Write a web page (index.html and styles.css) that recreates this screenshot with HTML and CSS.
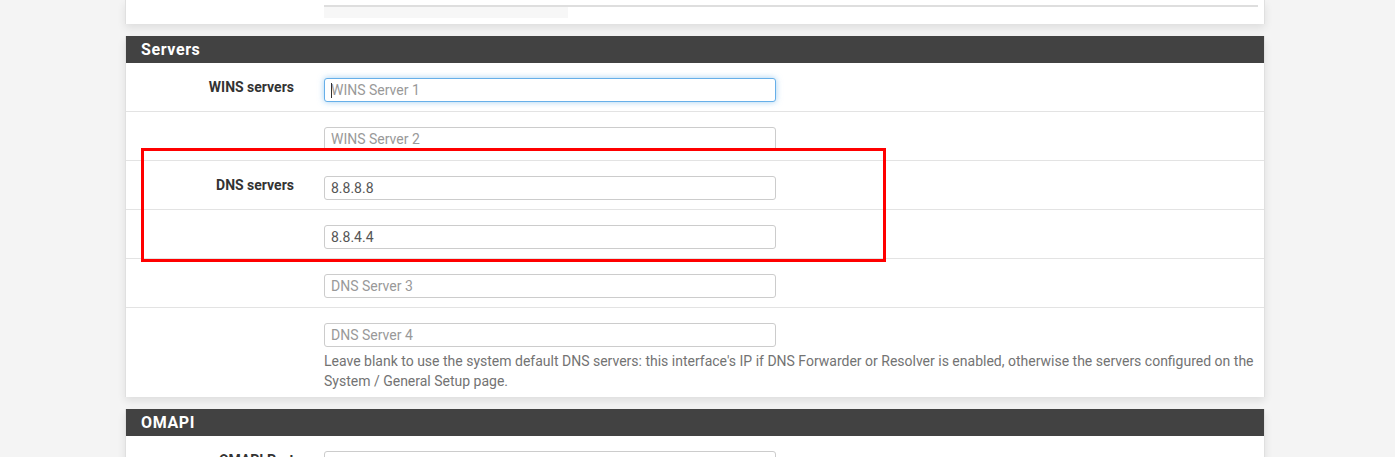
FILE: index.html
```html
<!DOCTYPE html>
<html lang="en">
<head>
<meta charset="utf-8">
<title>Servers</title>
<link rel="stylesheet" href="styles.css">
</head>
<body>
<div class="page">
  <div class="panel panel-top">
    <div class="rule"></div>
    <div class="bar"></div>
  </div>

  <div class="panel">
    <div class="panel-heading">Servers</div>
    <div class="panel-body">
      <div class="form-row">
        <label class="form-label">WINS servers</label>
        <div class="form-field">
          <span class="caret-wrap">
            <input class="form-input focused" type="text" placeholder="WINS Server 1">
            <span class="caret"></span>
          </span>
        </div>
      </div>
      <div class="form-row">
        <label class="form-label"></label>
        <div class="form-field"><input class="form-input" type="text" placeholder="WINS Server 2"></div>
      </div>
      <div class="form-row">
        <label class="form-label">DNS servers</label>
        <div class="form-field"><input class="form-input" type="text" value="8.8.8.8"></div>
      </div>
      <div class="form-row">
        <label class="form-label"></label>
        <div class="form-field"><input class="form-input" type="text" value="8.8.4.4"></div>
      </div>
      <div class="form-row">
        <label class="form-label"></label>
        <div class="form-field"><input class="form-input" type="text" placeholder="DNS Server 3"></div>
      </div>
      <div class="form-row form-row-last">
        <label class="form-label"></label>
        <div class="form-field">
          <input class="form-input" type="text" placeholder="DNS Server 4">
          <p class="help">Leave blank to use the system default DNS servers: this interface's IP if DNS Forwarder or Resolver is enabled, otherwise the servers configured on the System / General Setup page.</p>
        </div>
      </div>
    </div>
  </div>

  <div class="panel">
    <div class="panel-heading">OMAPI</div>
    <div class="panel-body">
      <div class="form-row">
        <label class="form-label">OMAPI Port</label>
        <div class="form-field"><input class="form-input" type="text"></div>
      </div>
      <div class="form-row">
        <label class="form-label">OMAPI Key</label>
        <div class="form-field"><input class="form-input" type="text"></div>
      </div>
    </div>
  </div>
</div>
<div class="highlight"></div>
</body>
</html>
```

FILE: styles.css
```css
html, body {
  margin: 0;
  padding: 0;
}

body {
  background: #f4f4f4;
  font-family: Roboto, "Liberation Sans", Arial, sans-serif;
  color: #333;
  overflow: hidden;
}

.page {
  padding-left: 125px;
}

.panel {
  width: 1140px;
  box-sizing: border-box;
  background: #fff;
  border-left: 1px solid #e0e0e0;
  border-right: 1px solid #e0e0e0;
  box-shadow: 0 4px 8px rgba(0, 0, 0, 0.09);
  margin-bottom: 12px;
}

.panel-top {
  padding: 5px 0 6px 198px;
}

.rule {
  width: 934px;
  height: 2px;
  background: #dedede;
}

.bar {
  width: 244px;
  height: 11px;
  background: #f7f7f7;
}

.panel-heading {
  height: 27px;
  line-height: 27px;
  background: #424242;
  color: #fff;
  font-size: 16px;
  font-weight: 700;
  letter-spacing: 0.6px;
  padding: 0 15px;
}

.form-row {
  display: flex;
  align-items: flex-start;
  padding: 15px 0 9px;
  border-bottom: 1px solid #e3e3e3;
}

.form-row-last {
  border-bottom: none;
  padding-bottom: 6px;
}

.form-label {
  width: 183px;
  flex: none;
  box-sizing: border-box;
  padding-right: 15px;
  text-align: right;
  font-size: 14px;
  font-weight: 700;
  line-height: 18px;
  color: #333;
}

.form-field {
  flex: 1;
  padding-left: 15px;
  padding-right: 10px;
}

.caret-wrap {
  position: relative;
  display: inline-block;
}

.caret {
  position: absolute;
  left: 7px;
  top: 5px;
  width: 1px;
  height: 15px;
  background: #333;
}

.form-input {
  display: block;
  width: 452px;
  height: 24px;
  box-sizing: border-box;
  border: 1px solid #ccc;
  border-radius: 3px;
  padding: 0 6px;
  font-family: Roboto, "Liberation Sans", Arial, sans-serif;
  font-size: 14px;
  color: #555;
  background: #fff;
  outline: none;
}

.form-input::placeholder {
  color: #999;
}

.form-input.focused {
  border-color: #66afe9;
  box-shadow: 0 0 6px rgba(102, 175, 233, 0.6);
}

.help {
  margin: 4px 0 0;
  font-size: 14px;
  line-height: 20px;
  color: #737373;
}

.highlight {
  position: absolute;
  left: 141px;
  top: 148px;
  width: 745px;
  height: 114px;
  box-sizing: border-box;
  border: 3px solid #f00;
}
```
